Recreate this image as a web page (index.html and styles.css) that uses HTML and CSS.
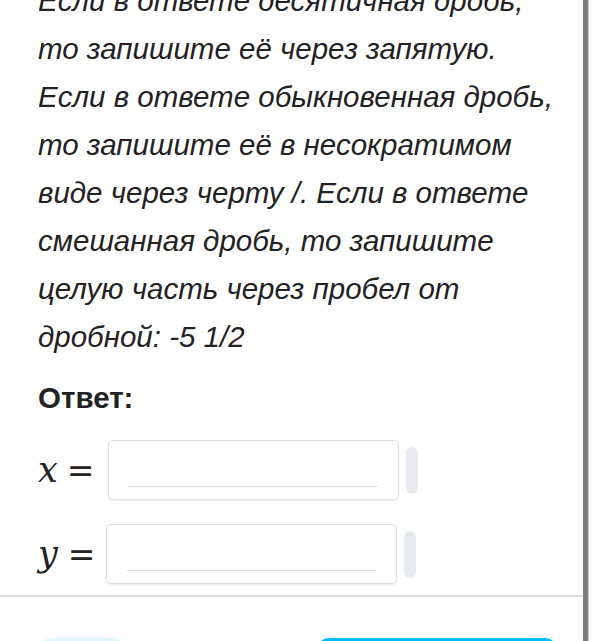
FILE: index.html
```html
<!DOCTYPE html>
<html lang="ru">
<head>
<meta charset="utf-8">
<link rel="stylesheet" href="styles.css">
</head>
<body>
<div class="frame">
  <div class="content">
    <p class="task">Если в ответе десятичная дробь,<br>то запишите её через запятую.<br>Если в ответе обыкновенная дробь,<br>то запишите её в несократимом<br>виде через черту /. Если в ответе<br>смешанная дробь, то запишите<br>целую часть через пробел от<br>дробной: -5 1/2</p>
    <div class="answer-title">Ответ:</div>
    <div class="rows">
      <div class="row">
        <span class="math"><i>x</i><span class="eq">=</span></span>
        <div class="box"><div class="line"></div></div>
        <div class="pill"></div>
      </div>
      <div class="row row-y">
        <span class="math"><i>y</i><span class="eq">=</span></span>
        <div class="box"><div class="line"></div></div>
        <div class="pill"></div>
      </div>
    </div>
  </div>
  <div class="footer">
    <div class="btn btn-light"></div>
    <div class="btn btn-primary"></div>
  </div>
</div>
</body>
</html>
```
FILE: styles.css
```css
html, body {
  margin: 0;
  padding: 0;
  background: #ffffff;
  overflow: hidden;
}
body {
  width: 594px;
  height: 641px;
}
.frame {
  width: 583px;
  height: 641px;
  border-right: 5px solid #7f7f7f;
  box-shadow: 1px 0 0 #cfcfcf;
  overflow: hidden;
  display: flex;
  flex-direction: column;
}
.content {
  padding-left: 38px;
  height: 595px;
  flex-shrink: 0;
}
.task {
  margin: -23px 0 0 0;
  font-family: "Liberation Sans", Arial, sans-serif;
  font-style: italic;
  font-size: 29.5px;
  line-height: 48px;
  color: #222222;
}
.answer-title {
  margin-top: 20px;
  font-family: "Liberation Sans", Arial, sans-serif;
  font-weight: bold;
  font-size: 29.5px;
  line-height: 34px;
  color: #222222;
}
.rows {
  margin-top: 25px;
  display: flex;
  flex-direction: column;
  gap: 24px;
}
.row {
  display: flex;
  align-items: center;
}
.math {
  font-family: "DejaVu Serif", serif;
  font-size: 33px;
  line-height: 40px;
  color: #222222;
  margin-right: 14px;
  display: flex;
  align-items: baseline;
}
.math i {
  font-size: 35px;
  margin-right: 9px;
}
.row-y .math i {
  margin-right: 10px;
}
.row-y .math {
  margin-right: 11px;
}
.box {
  width: 289px;
  border: 1px solid #dcdcdc;
  border-radius: 5px;
  box-shadow: 0 1px 2px rgba(0, 0, 0, 0.08);
  display: flex;
  align-items: flex-end;
  justify-content: center;
  padding-bottom: 12px;
  height: 46px;
}
.line {
  width: 249px;
  height: 1px;
  background: #dedede;
}
.pill {
  width: 12px;
  height: 47px;
  margin-left: 7px;
  border-radius: 6px;
  background: #e8eaed;
}
.footer {
  border-top: 2px solid #dddddd;
  flex-shrink: 0;
  height: 100px;
  display: flex;
  justify-content: space-between;
  align-items: flex-start;
  padding: 41px 26px 0 40px;
}
.btn {
  height: 48px;
  border-radius: 12px;
}
.btn-light {
  width: 84px;
  background: #e1f7fe;
  box-shadow: 0 0 6px rgba(180, 230, 250, 0.35);
}
.btn-primary {
  width: 240px;
  background: #00bdf6;
  box-shadow: 0 0 6px rgba(0, 189, 246, 0.15);
}
```
